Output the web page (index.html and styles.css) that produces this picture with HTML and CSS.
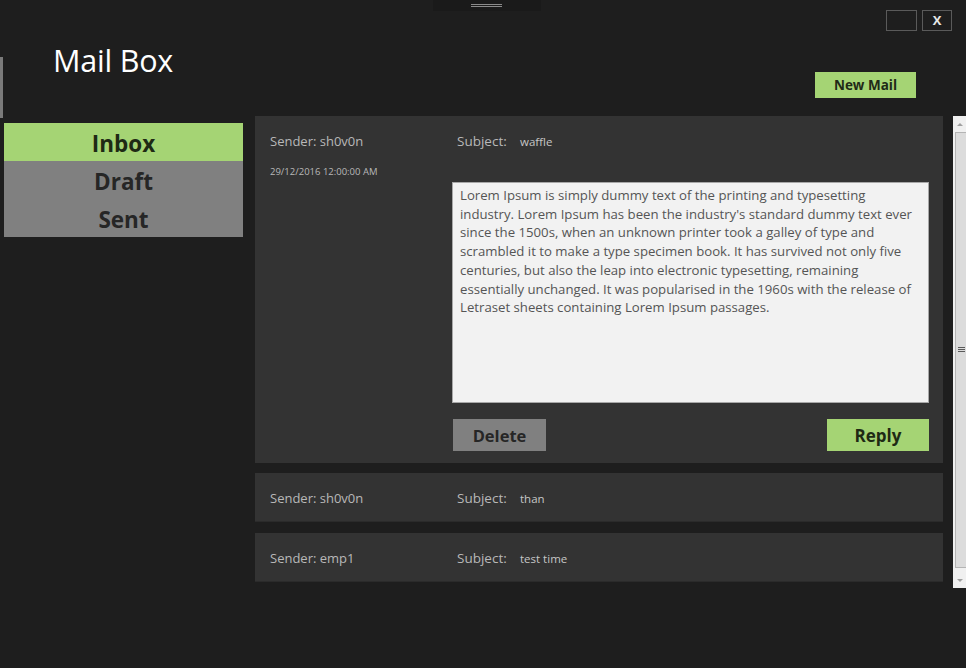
FILE: index.html
```html
<!DOCTYPE html>
<html>
<head>
<meta charset="utf-8">
<link rel="stylesheet" href="styles.css">
</head>
<body>
<div class="app">
  <header class="header">
    <div class="topbar">
      <div class="handle"><span class="grip"></span></div>
      <div class="controls">
        <div class="ctl"></div>
        <div class="ctl ctl-close">X</div>
      </div>
    </div>
    <div class="titlerow">
      <h1 class="title">Mail Box</h1>
      <button class="btn btn-green btn-new">New Mail</button>
    </div>
  </header>
  <div class="content">
    <nav class="nav">
      <div class="nav-item active">Inbox</div>
      <div class="nav-item">Draft</div>
      <div class="nav-item">Sent</div>
    </nav>
    <main class="list">
      <section class="card card-open">
        <div class="col-left">
          <div class="sender">Sender: sh0v0n</div>
          <div class="date">29/12/2016 12:00:00 AM</div>
        </div>
        <div class="col-right">
          <div class="subject"><span class="subj-label">Subject:</span><span class="subj-value">waffle</span></div>
          <div class="body-box">Lorem Ipsum is simply dummy text of the printing and typesetting<br>industry. Lorem Ipsum has been the industry's standard dummy text ever<br>since the 1500s, when an unknown printer took a galley of type and<br>scrambled it to make a type specimen book. It has survived not only five<br>centuries, but also the leap into electronic typesetting, remaining<br>essentially unchanged. It was popularised in the 1960s with the release of<br>Letraset sheets containing Lorem Ipsum passages.</div>
          <div class="actions">
            <button class="btn btn-gray btn-delete">Delete</button>
            <button class="btn btn-green btn-reply">Reply</button>
          </div>
        </div>
      </section>
      <section class="card card-closed">
        <div class="col-left"><div class="sender">Sender: sh0v0n</div></div>
        <div class="col-right"><div class="subject"><span class="subj-label">Subject:</span><span class="subj-value">than</span></div></div>
      </section>
      <section class="card card-closed card-last">
        <div class="col-left"><div class="sender">Sender: emp1</div></div>
        <div class="col-right"><div class="subject"><span class="subj-label">Subject:</span><span class="subj-value">test time</span></div></div>
      </section>
    </main>
    <div class="scrollbar">
      <div class="arrow arrow-up"></div>
      <div class="thumb"><span class="thumb-grip"></span></div>
      <div class="arrow arrow-down"></div>
    </div>
  </div>
  <div class="edge"></div>
</div>
</body>
</html>
```
FILE: styles.css
```css
* { box-sizing: border-box; }
html, body { margin: 0; padding: 0; }
body {
  background: #1e1e1e;
  font-family: "Open Sans", "Noto Sans", sans-serif;
  width: 966px;
  height: 668px;
  overflow: hidden;
}
.app { position: relative; height: 668px; }
.edge {
  position: absolute;
  left: 0; top: 57px;
  width: 3px; height: 61px;
  background: #7a7a7a;
}
.header { height: 116px; display: flex; flex-direction: column; }
.topbar { height: 40px; display: flex; align-items: flex-start; }
.handle {
  margin-left: 433px;
  width: 108px;
  height: 11px;
  background: #1a1a1a;
  display: flex;
  justify-content: center;
  padding-top: 4px;
}
.grip {
  display: block;
  width: 31px;
  height: 3px;
  border-top: 1px solid #8a8a8a;
  border-bottom: 1px solid #8a8a8a;
  margin-left: -2px;
}
.controls { margin-left: auto; margin-right: 14px; margin-top: 10px; display: flex; gap: 5px; }
.ctl {
  width: 31px; height: 21px;
  border: 1px solid #5a5a5a;
  color: #e6e6e6;
  font-weight: 700;
  font-size: 13px;
  line-height: 19px;
  text-align: center;
}
.ctl-close { width: 30px; }
.titlerow { flex: 1; display: flex; align-items: flex-start; padding-left: 53px; padding-right: 50px; }
.title {
  margin: 0;
  font-weight: 400;
  font-size: 30.5px;
  line-height: 40px;
  color: #ffffff;
  letter-spacing: -0.2px;
}
.btn {
  border: 0;
  font-family: "Open Sans", "Noto Sans", sans-serif;
  font-weight: 700;
  color: #1e1e1e;
  padding: 0;
  cursor: pointer;
}
.btn-green { background: #a5d474; }
.btn-gray { background: #808080; }
.btn-new {
  margin-left: auto;
  margin-top: 32px;
  width: 101px;
  height: 26px;
  font-size: 13.5px;
  line-height: 26px;
  color: #1f2a17;
}
.content { display: flex; align-items: flex-start; }
.nav { margin-left: 4px; margin-top: 7px; width: 239px; }
.nav-item {
  height: 38px;
  padding-top: 4px;
  background: #808080;
  color: #262626;
  font-weight: 700;
  font-size: 22.5px;
  line-height: 34px;
  text-align: center;
}
.nav-item.active { background: #a5d474; color: #1e2a14; }
.list { margin-left: 12px; width: 688px; display: flex; flex-direction: column; gap: 10px; }
.card {
  background: #333333;
  display: grid;
  grid-template-columns: 182px 1fr;
  padding: 16px 14px 12px 15px;
}
.card-closed { height: 49px; padding-top: 16px; padding-bottom: 0; border-bottom: 1px solid #2b2b2b; }
.card-last { margin-top: 1px; }
.sender {
  font-size: 13px;
  line-height: 18px;
  color: #b8b8b8;
}
.date {
  margin-top: 16px;
  font-size: 9.5px;
  line-height: 12px;
  color: #b8b8b8;
}
.subject { padding-left: 5px; display: flex; align-items: baseline; height: 18px; }
.subj-label { font-size: 13.5px; line-height: 18px; color: #b8b8b8; width: 63px; }
.subj-value { font-size: 11.5px; line-height: 18px; color: #c6c6c6; }
.body-box {
  margin-top: 32px;
  height: 221px;
  background: #f2f2f2;
  border: 1px solid #a8a8a8;
  padding: 3px 7px;
  font-size: 13.2px;
  line-height: 18.7px;
  color: #555555;
  white-space: nowrap;
  overflow: hidden;
}
.actions { margin-top: 16px; display: flex; justify-content: space-between; }
.btn-delete {
  margin-left: 1px;
  width: 93px; height: 32px;
  font-size: 16.5px;
  color: #262626;
}
.btn-reply {
  width: 102px; height: 32px;
  font-size: 17px;
  color: #1e2a14;
}
.scrollbar {
  margin-left: 10px;
  width: 13px;
  height: 472px;
  background: #f0f0f0;
  display: flex;
  flex-direction: column;
  padding-left: 1px;
}
.arrow { height: 16px; display: flex; justify-content: center; align-items: center; }
.arrow-up::before {
  content: "";
  border-left: 3px solid transparent;
  border-right: 3px solid transparent;
  border-bottom: 3px solid #a0a0a0;
}
.arrow-down::before {
  content: "";
  border-left: 3px solid transparent;
  border-right: 3px solid transparent;
  border-top: 3px solid #a0a0a0;
}
.thumb {
  flex: 1;
  margin: 0 0 4px 1px;
  background: #dcdcdc;
  border: 1px solid #b4b4b4;
  border-right: 0;
  display: flex;
  align-items: center;
  justify-content: flex-end;
}
.thumb-grip {
  display: block;
  width: 7px;
  height: 6px;
  margin-right: 1px;
  background: repeating-linear-gradient(#5a5a5a 0 1px, transparent 1px 2px);
}
```
